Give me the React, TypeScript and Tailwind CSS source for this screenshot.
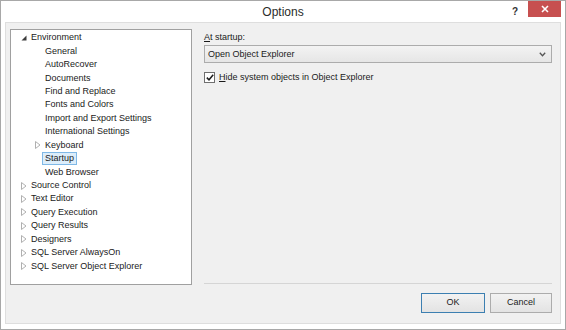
import React from "react";

const F = { fontFamily: '"Liberation Sans", Arial, sans-serif' };

function Expanded() {
  return (
    <svg width="6" height="6" viewBox="0 0 6 6" className="block">
      <path d="M5.5 0.5 L5.5 5.5 L0.5 5.5 Z" fill="#3c3c3c" />
    </svg>
  );
}

function Collapsed() {
  return (
    <svg width="6" height="8" viewBox="0 0 6 8" className="block">
      <path d="M0.5 0.5 L5 4 L0.5 7.5 Z" fill="none" stroke="#b0b0b0" strokeWidth="1" />
    </svg>
  );
}

type Item = { label: string; level: 0 | 1; state?: "exp" | "col"; selected?: boolean };

const items: Item[] = [
  { label: "Environment", level: 0, state: "exp" },
  { label: "General", level: 1 },
  { label: "AutoRecover", level: 1 },
  { label: "Documents", level: 1 },
  { label: "Find and Replace", level: 1 },
  { label: "Fonts and Colors", level: 1 },
  { label: "Import and Export Settings", level: 1 },
  { label: "International Settings", level: 1 },
  { label: "Keyboard", level: 1, state: "col" },
  { label: "Startup", level: 1, selected: true },
  { label: "Web Browser", level: 1 },
  { label: "Source Control", level: 0, state: "col" },
  { label: "Text Editor", level: 0, state: "col" },
  { label: "Query Execution", level: 0, state: "col" },
  { label: "Query Results", level: 0, state: "col" },
  { label: "Designers", level: 0, state: "col" },
  { label: "SQL Server AlwaysOn", level: 0, state: "col" },
  { label: "SQL Server Object Explorer", level: 0, state: "col" },
];

function Row({ it }: { it: Item }) {
  return (
    <div className="h-[13.45px] flex items-center">
      <div className={it.level === 0 ? "w-[20px] shrink-0 flex justify-end pr-[4px]" : "w-[34px] shrink-0 flex justify-end pr-[4px]"}>
        {it.state === "exp" ? <Expanded /> : it.state === "col" ? <Collapsed /> : null}
      </div>
      <span
        className={
          it.selected
            ? "bg-[#dcedfa] border border-[#7fb8e6] px-[2px] -ml-[3px] leading-[11px] text-[9px] text-[#1a1a1a]"
            : "text-[9px] leading-[11px] text-[#1a1a1a]"
        }
      >
        {it.label}
      </span>
    </div>
  );
}

export default function App() {
  return (
    <div style={F} className="w-[566px] h-[330px] bg-white border border-[#a8a8a8] flex flex-col select-none">
      {/* Title bar */}
      <div className="h-[21px] grid grid-cols-[1fr_auto_1fr] items-start">
        <div />
        <div className="text-[12px] text-[#2b2b2b] pt-[4px] leading-[14px]">Options</div>
        <div className="flex justify-end items-start pr-[4px]">
          <span className="text-[10px] font-bold text-[#333] mt-[6px] mr-[10px] leading-[10px]">?</span>
          <div className="w-[33px] h-[16px] bg-[#c75050] flex items-center justify-center">
            <svg width="8" height="8" viewBox="0 0 8 8">
              <path d="M1 1 L7 7 M7 1 L1 7" stroke="#fff" strokeWidth="1.6" />
            </svg>
          </div>
        </div>
      </div>

      {/* Client area */}
      <div className="mx-[4px] mb-[5px] flex-1 bg-[#f0f0f0] border border-[#dedede] flex flex-col">
        <div className="flex pt-[6px] pl-[4px] pr-[8px]">
          {/* Tree */}
          <div className="w-[182px] h-[256px] bg-white border border-[#a0a0a0] pt-[1px]">
            {items.map((it) => (
              <Row key={it.label} it={it} />
            ))}
          </div>

          {/* Right panel */}
          <div className="flex-1 ml-[12px] flex flex-col">
            <div className="text-[9px] leading-[11px] text-[#1a1a1a] mt-[3px]">
              <span className="underline">A</span>t startup:
            </div>
            <div className="mt-[2px] h-[18px] border border-[#acacac] bg-gradient-to-b from-[#f3f3f3] to-[#e6e6e6] flex items-center justify-between pl-[3px] pr-[5px]">
              <span className="text-[9px] leading-[11px] text-[#1a1a1a]">Open Object Explorer</span>
              <svg width="7" height="5" viewBox="0 0 7 5">
                <path d="M0.8 0.8 L3.5 3.8 L6.2 0.8" fill="none" stroke="#555" strokeWidth="1.3" />
              </svg>
            </div>
            <div className="mt-[9px] flex items-center">
              <div className="w-[11px] h-[11px] bg-white border border-[#6f6f6f] flex items-center justify-center">
                <svg width="8" height="7" viewBox="0 0 8 7">
                  <path d="M0.8 3.6 L3 5.8 L7.2 0.8" fill="none" stroke="#1e1e1e" strokeWidth="1.5" />
                </svg>
              </div>
              <span className="ml-[4px] text-[9px] leading-[11px] text-[#1a1a1a]">
                <span className="underline">H</span>ide system objects in Object Explorer
              </span>
            </div>
            <div className="flex-1" />
            <div className="h-[1px] bg-[#d5d5d5] mb-[1px]" />
          </div>
        </div>

        {/* Buttons */}
        <div className="flex justify-end gap-[5px] pr-[8px] mt-[8px]">
          <div className="w-[64px] h-[20px] bg-gradient-to-b from-[#f2f2f2] to-[#e3e3e3] border border-[#3c7fb1] flex items-center justify-center text-[9px] text-[#1a1a1a]">
            OK
          </div>
          <div className="w-[62px] h-[20px] bg-gradient-to-b from-[#f2f2f2] to-[#e3e3e3] border border-[#acacac] flex items-center justify-center text-[9px] text-[#1a1a1a]">
            Cancel
          </div>
        </div>
      </div>
    </div>
  );
}
